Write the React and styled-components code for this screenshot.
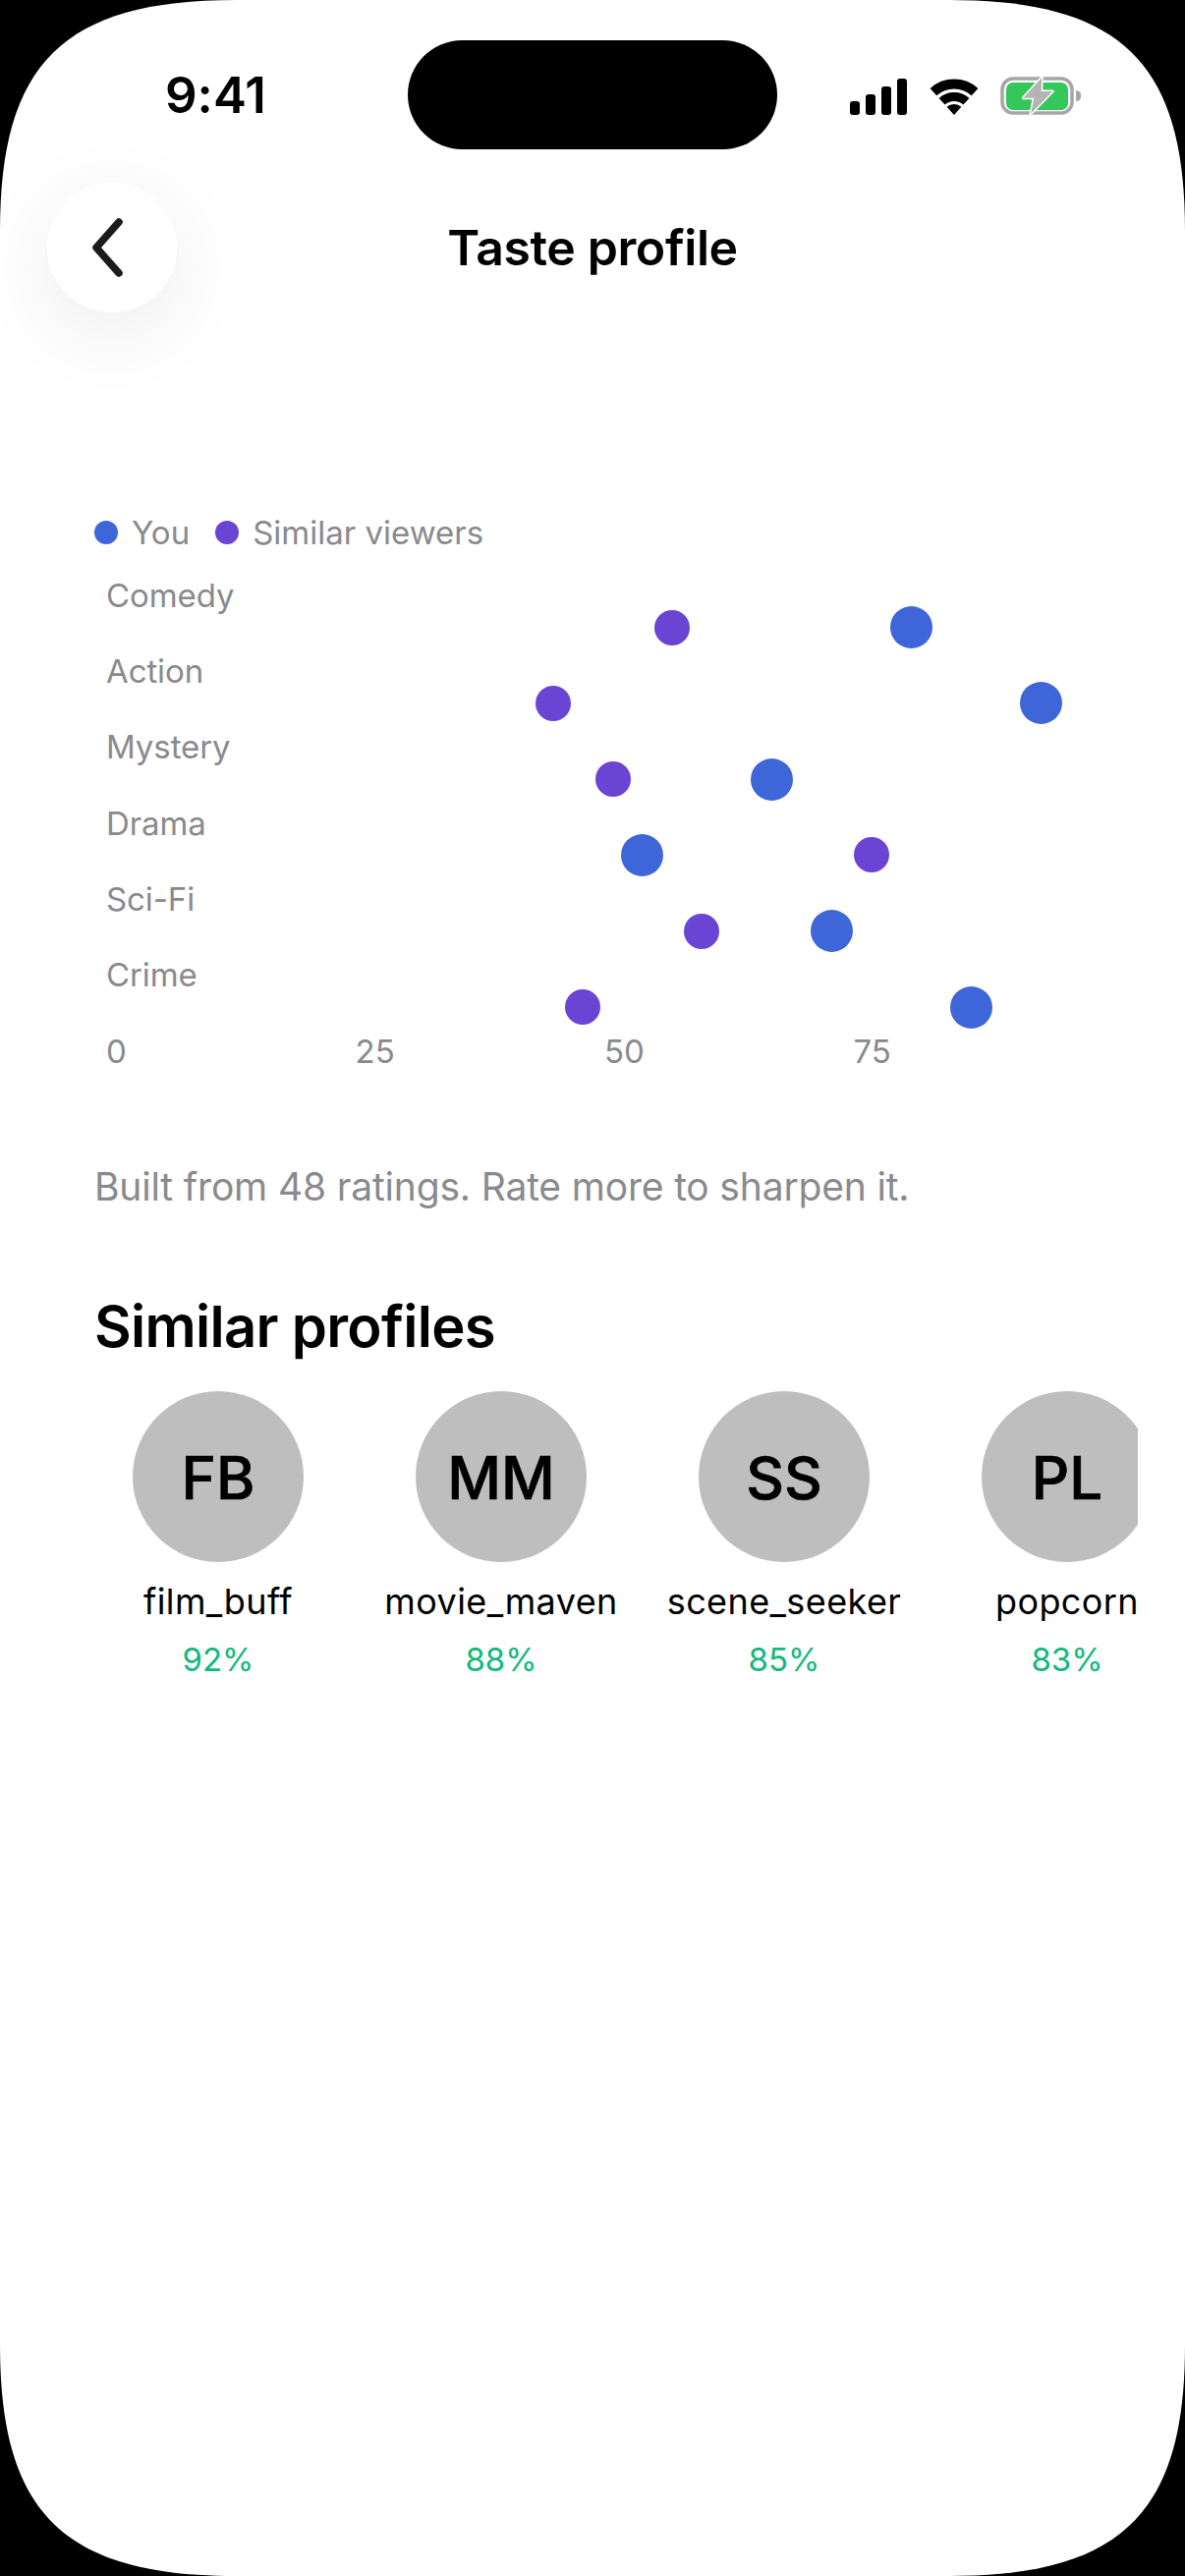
import React from 'react';
import styled, { createGlobalStyle } from 'styled-components';

const GlobalStyle = createGlobalStyle`
  html, body {
    margin: 0;
    padding: 0;
    background: #000;
  }
  * {
    box-sizing: border-box;
  }
`;

const Screen = styled.div`
  width: 1206px;
  height: 2622px;
  background: #fff;
  font-family: Inter, "Liberation Sans", sans-serif;
  font-variant-ligatures: none;
  display: flex;
  flex-direction: column;
  position: relative;
  overflow: hidden;
  clip-path: path("M0 235 C0 65 64 0 240 0 L966 0 C1142 0 1206 65 1206 235 L1206 2387 C1206 2557 1142 2622 966 2622 L240 2622 C64 2622 0 2557 0 2387 Z");
`;

const StatusBar = styled.div`
  height: 186px;
  display: flex;
  justify-content: space-between;
  align-items: flex-start;
  padding: 78px 106px 0 168px;
`;

const Time = styled.div`
  font-size: 51px;
  line-height: 38px;
  font-weight: 600;
  color: #000;
`;

const Island = styled.div`
  position: absolute;
  left: 415px;
  top: 41px;
  width: 376px;
  height: 111px;
  border-radius: 56px;
  background: #000;
`;

const StatusIcons = styled.div`
  display: flex;
  align-items: center;
  gap: 22.5px;
`;

const Header = styled.div`
  display: grid;
  grid-template-columns: 132px 1fr 132px;
  align-items: center;
  padding: 0 48px;
`;

const BackButton = styled.div`
  width: 132px;
  height: 132px;
  border-radius: 50%;
  background: #fff;
  display: flex;
  align-items: center;
  justify-content: center;
  box-shadow: 0 20px 84px rgba(0, 0, 0, 0.08);
`;

const Title = styled.div`
  font-size: 50px;
  letter-spacing: -0.4px;
  font-weight: 600;
  color: #000;
  text-align: center;
`;

const Main = styled.div`
  padding: 206px 0 0 96px;
`;

const Legend = styled.div`
  display: flex;
  align-items: center;
  height: 36px;
`;

const LegendDot = styled.span`
  width: 24px;
  height: 24px;
  border-radius: 50%;
  background: ${(p) => p.$color};
  margin-right: 14px;
`;

const LegendText = styled.span`
  font-size: 33px;
  color: #8a8a8e;
  margin-right: 26px;
`;

const Chart = styled.div`
  position: relative;
  padding-left: 12px;
  margin-top: 7px;
`;

const RowLabel = styled.div`
  height: 77.3px;
  display: flex;
  align-items: center;
  font-size: 33px;
  letter-spacing: -0.1px;
  color: #8a8a8e;
`;

const Axis = styled.div`
  display: flex;
  height: 77.3px;
  padding-top: 2px;
  align-items: center;
`;

const Tick = styled.div`
  width: 253.5px;
  font-size: 33px;
  color: #8a8a8e;
`;

const Dot = styled.span`
  position: absolute;
  width: ${(p) => p.$size}px;
  height: ${(p) => p.$size}px;
  margin: ${(p) => -p.$size / 2}px 0 0 ${(p) => -p.$size / 2}px;
  border-radius: 50%;
  background: ${(p) => p.$color};
`;

const Note = styled.div`
  font-size: 39px;
  line-height: 48px;
  letter-spacing: -0.17px;
  color: #8a8a8e;
  margin-top: 76px;
`;

const SectionTitle = styled.div`
  font-size: 58px;
  line-height: 72px;
  letter-spacing: -0.7px;
  font-weight: 600;
  color: #000;
  margin-top: 82px;
`;

const Profiles = styled.div`
  display: flex;
  gap: 36px;
  width: 1062px;
  overflow: hidden;
  margin-top: 30px;
`;

const Profile = styled.div`
  flex: 0 0 252px;
  display: flex;
  flex-direction: column;
  align-items: center;
`;

const Avatar = styled.div`
  width: 174px;
  height: 174px;
  padding-top: 2px;
  border-radius: 50%;
  background: #bebebe;
  display: flex;
  align-items: center;
  justify-content: center;
  font-size: 60px;
  font-weight: 500;
  -webkit-text-stroke: 0.7px #000;
  color: #000;
`;

const Name = styled.div`
  font-size: 36px;
  line-height: 44px;
  letter-spacing: 0.4px;
  color: #000;
  margin-top: 18px;
  white-space: nowrap;
`;

const Match = styled.div`
  font-size: 33px;
  line-height: 40px;
  color: #10b97c;
  margin-top: 17px;
`;

const BLUE = '#3e66d8';
const PURPLE = '#6a45d3';

// dot centres relative to the chart box
const rowY = [71.5, 148.8, 226.1, 303.4, 380.7, 458];
const you = [831.6, 963.2, 689.5, 557.3, 750.2, 892.5];
const similar = [588.3, 466.5, 527.6, 790.8, 618.4, 496.7];

const genres = ['Comedy', 'Action', 'Mystery', 'Drama', 'Sci-Fi', 'Crime'];
const ticks = ['0', '25', '50', '75'];

const profiles = [
  { initials: 'FB', name: 'film_buff', match: '92%' },
  { initials: 'MM', name: 'movie_maven', match: '88%' },
  { initials: 'SS', name: 'scene_seeker', match: '85%' },
  { initials: 'PL', name: 'popcorn', match: '83%' },
];

function SignalIcon() {
  return (
    <svg width="58" height="37" viewBox="0 0 58 37">
      <rect x="0" y="23" width="10" height="14" rx="3" fill="#000" />
      <rect x="16" y="16" width="10" height="21" rx="3" fill="#000" />
      <rect x="32" y="8" width="10" height="29" rx="3" fill="#000" />
      <rect x="48" y="0" width="10" height="37" rx="3" fill="#000" />
    </svg>
  );
}

function WifiIcon() {
  return (
    <svg width="50" height="37" viewBox="0 0 50 37">
      <path d="M3.9 13.6A31.5 31.5 0 0 1 46.1 13.6" fill="none" stroke="#000" strokeWidth="10" />
      <path d="M12.6 23.25A18.5 18.5 0 0 1 37.4 23.25" fill="none" stroke="#000" strokeWidth="9" />
      <path d="M25 37L17.6 28.8A11 11 0 0 1 32.4 28.8Z" fill="#000" />
    </svg>
  );
}

function BatteryIcon() {
  return (
    <svg width="82" height="40" viewBox="0 0 82 40">
      <rect x="2" y="2" width="71" height="35" rx="11" fill="none" stroke="#a6a6a6" strokeWidth="3.5" />
      <rect x="6" y="6" width="63" height="28" rx="7" fill="#34c759" />
      <path d="M77 14A5.5 5.5 0 0 1 77 25Z" fill="#a6a6a6" />
      <path
        d="M42.3 1L23.3 21.7H34.3L31 37.7L53.3 15H41.7Z"
        fill="#b4b4b4"
        stroke="#fff"
        strokeWidth="3"
        strokeLinejoin="round"
        paintOrder="stroke"
      />
    </svg>
  );
}

function BackIcon() {
  return (
    <svg width="40" height="62" viewBox="0 0 40 62" fill="none">
      <path d="M27 5L4 31L27 57" stroke="#1c1c1e" strokeWidth="7.5" strokeLinecap="round" strokeLinejoin="round" />
    </svg>
  );
}

export default function App() {
  return (
    <>
      <GlobalStyle />
      <Screen>
        <StatusBar>
          <Time>9:41</Time>
          <StatusIcons>
            <SignalIcon />
            <WifiIcon />
            <BatteryIcon />
          </StatusIcons>
        </StatusBar>
        <Island />
        <Header>
          <BackButton>
            <BackIcon />
          </BackButton>
          <Title>Taste profile</Title>
        </Header>
        <Main>
          <Legend>
            <LegendDot $color={BLUE} />
            <LegendText>You</LegendText>
            <LegendDot $color={PURPLE} />
            <LegendText>Similar viewers</LegendText>
          </Legend>
          <Chart>
            {genres.map((g) => (
              <RowLabel key={g}>{g}</RowLabel>
            ))}
            <Axis>
              {ticks.map((t) => (
                <Tick key={t}>{t}</Tick>
              ))}
            </Axis>
            {rowY.map((y, i) => (
              <React.Fragment key={y}>
                <Dot $size={43} $color={BLUE} style={{ left: you[i], top: y }} />
                <Dot $size={36} $color={PURPLE} style={{ left: similar[i], top: y }} />
              </React.Fragment>
            ))}
          </Chart>
          <Note>Built from 48 ratings. Rate more to sharpen it.</Note>
          <SectionTitle>Similar profiles</SectionTitle>
          <Profiles>
            {profiles.map((p) => (
              <Profile key={p.name}>
                <Avatar>{p.initials}</Avatar>
                <Name>{p.name}</Name>
                <Match>{p.match}</Match>
              </Profile>
            ))}
          </Profiles>
        </Main>
      </Screen>
    </>
  );
}
